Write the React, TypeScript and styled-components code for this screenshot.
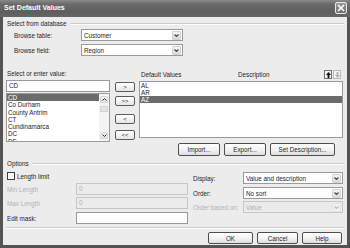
import styled, { createGlobalStyle } from 'styled-components'

const GlobalStyle = createGlobalStyle`
  html, body {
    margin: 0;
    padding: 0;
    background: #ffffff;
  }
  body {
    font-family: 'Liberation Sans', Arial, sans-serif;
    font-size: 6.3px;
    color: #1e1e1e;
  }
  * {
    box-sizing: border-box;
  }
`

const leftValues = ['CD', 'Co Durham', 'County Antrim', 'CT', 'Cundinamarca', 'DC', 'DE']
const defaultValues = ['AL', 'AR', 'AZ']

export default function App() {
    return (
        <>
            <GlobalStyle />
            <Window>
                <TitleBar>
                    <Title>Set Default Values</Title>
                    <CloseButton>
                        <svg width="8" height="8" viewBox="0 0 8 8">
                            <path d="M1 1 L7 7 M7 1 L1 7" stroke="#fff" strokeWidth="1.6" />
                        </svg>
                    </CloseButton>
                </TitleBar>
                <Body>
                    <GroupHeader>
                        <span>Select from database</span>
                        <GroupLine />
                    </GroupHeader>
                    <FieldRow $top={1}>
                        <FieldLabel $width={67}>Browse table:</FieldLabel>
                        <Combo $width={102}>
                            <ComboText>Customer</ComboText>
                            <DropButton />
                        </Combo>
                    </FieldRow>
                    <FieldRow $top={3}>
                        <FieldLabel $width={67}>Browse field:</FieldLabel>
                        <Combo $width={102}>
                            <ComboText>Region</ComboText>
                            <DropButton />
                        </Combo>
                    </FieldRow>

                    <ValuesArea>
                        <LeftColumn>
                            <ColumnLabel>Select or enter value:</ColumnLabel>
                            <TextBox>CD</TextBox>
                            <ListBox $height={49}>
                                <ListItems>
                                    {leftValues.map((v, i) => (
                                        <LeftItem key={v} $selected={i === 0}>
                                            {v}
                                        </LeftItem>
                                    ))}
                                </ListItems>
                                <ScrollBar>
                                    <ScrollArrow>
                                        <Chevron up />
                                    </ScrollArrow>
                                    <ScrollThumb />
                                    <ScrollTrack />
                                    <ScrollArrow>
                                        <Chevron />
                                    </ScrollArrow>
                                </ScrollBar>
                            </ListBox>
                        </LeftColumn>

                        <MoveColumn>
                            <MoveButton $top={15}>&gt;</MoveButton>
                            <MoveButton $top={4}>&gt;&gt;</MoveButton>
                            <MoveButton $top={8}>&lt;</MoveButton>
                            <MoveButton $top={6}>&lt;&lt;</MoveButton>
                        </MoveColumn>

                        <RightColumn>
                            <RightHeader>
                                <HeaderText $width={97}>Default Values</HeaderText>
                                <HeaderText $width={86}>Description</HeaderText>
                                <ArrowButton>
                                    <svg width="5" height="6" viewBox="0 0 5 6">
                                        <path d="M2.5 0 L5 3 L3.4 3 L3.4 6 L1.6 6 L1.6 3 L0 3 Z" fill="#111" />
                                    </svg>
                                </ArrowButton>
                                <ArrowButton $disabled>
                                    <svg width="5" height="6" viewBox="0 0 5 6">
                                        <path d="M2.5 6 L5 3 L3.4 3 L3.4 0 L1.6 0 L1.6 3 L0 3 Z" fill="#b0b0b0" />
                                    </svg>
                                </ArrowButton>
                            </RightHeader>
                            <ListBox $height={57}>
                                <ListItems>
                                    {defaultValues.map((v, i) => (
                                        <RightItem key={v} $selected={i === 2}>
                                            {v}
                                        </RightItem>
                                    ))}
                                </ListItems>
                            </ListBox>
                            <ActionRow>
                                <PushButton $width={42}>Import...</PushButton>
                                <PushButton $width={42}>Export...</PushButton>
                                <PushButton $width={65}>Set Description...</PushButton>
                            </ActionRow>
                        </RightColumn>
                    </ValuesArea>

                    <GroupHeader $top={4}>
                        <span>Options</span>
                        <GroupLine />
                    </GroupHeader>

                    <OptionsArea>
                        <OptionsColumn>
                            <CheckRow>
                                <CheckBox />
                                <span>Length limit</span>
                            </CheckRow>
                            <OptionRow $top={3}>
                                <OptionLabel $width={70} $disabled>
                                    Min Length
                                </OptionLabel>
                                <TextBox $width={112} $disabled>
                                    0
                                </TextBox>
                            </OptionRow>
                            <OptionRow $top={2}>
                                <OptionLabel $width={70} $disabled>
                                    Max Length
                                </OptionLabel>
                                <TextBox $width={112} $disabled>
                                    0
                                </TextBox>
                            </OptionRow>
                            <OptionRow $top={3}>
                                <OptionLabel $width={70}>Edit mask:</OptionLabel>
                                <TextBox $width={112} />
                            </OptionRow>
                        </OptionsColumn>
                        <OptionsColumn>
                            <OptionRow $top={4}>
                                <OptionLabel $width={51}>Display:</OptionLabel>
                                <Combo $width={100}>
                                    <ComboText>Value and description</ComboText>
                                    <DropButton />
                                </Combo>
                            </OptionRow>
                            <OptionRow $top={3}>
                                <OptionLabel $width={51}>Order:</OptionLabel>
                                <Combo $width={100}>
                                    <ComboText>No sort</ComboText>
                                    <DropButton />
                                </Combo>
                            </OptionRow>
                            <OptionRow $top={2}>
                                <OptionLabel $width={51} $disabled>
                                    Order based on:
                                </OptionLabel>
                                <Combo $width={100} $disabled>
                                    <ComboText>Value</ComboText>
                                    <DropButton $disabled />
                                </Combo>
                            </OptionRow>
                        </OptionsColumn>
                    </OptionsArea>

                    <Separator />

                    <DialogButtons>
                        <PushButton $width={45} $height={12}>
                            OK
                        </PushButton>
                        <PushButton $width={41} $height={12}>
                            Cancel
                        </PushButton>
                        <PushButton $width={40} $height={12}>
                            Help
                        </PushButton>
                    </DialogButtons>
                </Body>
            </Window>
        </>
    )
}

function Chevron({ up }: { up?: boolean }) {
    return (
        <svg width="5" height="3" viewBox="0 0 5 3">
            <path d={up ? 'M0.5 2.5 L2.5 0.5 L4.5 2.5' : 'M0.5 0.5 L2.5 2.5 L4.5 0.5'} stroke="#333" strokeWidth="1" fill="none" />
        </svg>
    )
}

function DropButton({ $disabled }: { $disabled?: boolean }) {
    return (
        <DropBox $disabled={$disabled}>
            <svg width="5" height="3" viewBox="0 0 5 3">
                <path d="M0.5 0.5 L2.5 2.5 L4.5 0.5" stroke={$disabled ? '#bbb' : '#444'} strokeWidth="1.1" fill="none" />
            </svg>
        </DropBox>
    )
}

const Window = styled.div`
    width: 350px;
    height: 248px;
    display: flex;
    flex-direction: column;
    background: #545454;
    padding: 0 3px 3px 3px;
`

const TitleBar = styled.div`
    height: 17px;
    margin: 0 -3px;
    padding: 0 3px 0 4px;
    display: flex;
    align-items: center;
    justify-content: space-between;
    background: linear-gradient(to bottom, #8a8a8a 0%, #6a6a6a 25%, #5e5e5e 70%, #666 100%);
`

const Title = styled.div`
    color: #ffffff;
    font-weight: bold;
    font-size: 7px;
    margin-top: -2px;
`

const CloseButton = styled.div`
    width: 12px;
    height: 12px;
    margin-top: -2px;
    border: 1px solid #e8e8e8;
    border-radius: 2px;
    background: linear-gradient(to bottom, #9a9a9a, #6f6f6f);
    display: flex;
    align-items: center;
    justify-content: center;
`

const Body = styled.div`
    flex: 1;
    background: #ececec;
    padding: 0 3px 0 3px;
    display: flex;
    flex-direction: column;
`

const GroupHeader = styled.div<{ $top?: number }>`
    margin-top: ${(p) => p.$top ?? 3}px;
    height: 8px;
    line-height: 8px;
    padding-left: 1px;
    display: flex;
    align-items: center;
    gap: 3px;
    white-space: nowrap;
`

const GroupLine = styled.div`
    flex: 1;
    height: 2px;
    border-top: 1px solid #cdcdcd;
    border-bottom: 1px solid #ffffff;
`

const FieldRow = styled.div<{ $top: number }>`
    margin-top: ${(p) => p.$top}px;
    padding-left: 8px;
    display: flex;
    align-items: center;
`

const FieldLabel = styled.div<{ $width: number }>`
    width: ${(p) => p.$width}px;
`

const Combo = styled.div<{ $width: number; $disabled?: boolean }>`
    width: ${(p) => p.$width}px;
    height: 12px;
    border: 1px solid ${(p) => (p.$disabled ? '#c6c6c6' : '#9a9a9a')};
    background: ${(p) => (p.$disabled ? '#ebebeb' : '#ffffff')};
    color: ${(p) => (p.$disabled ? '#b2b2b2' : '#1e1e1e')};
    display: flex;
    align-items: center;
    padding: 0 1px 0 2px;
`

const ComboText = styled.div`
    flex: 1;
    white-space: nowrap;
    overflow: hidden;
`

const DropBox = styled.div<{ $disabled?: boolean }>`
    width: 9px;
    height: 9px;
    border: 1px solid ${(p) => (p.$disabled ? '#e2e2e2' : '#d2d2d2')};
    border-radius: 1px;
    background: ${(p) => (p.$disabled ? '#f0f0f0' : 'linear-gradient(to bottom, #f4f4f4, #dadada)')};
    display: flex;
    align-items: center;
    justify-content: center;
`

const ValuesArea = styled.div`
    margin-top: 11px;
    display: flex;
    align-items: flex-start;
`

const LeftColumn = styled.div`
    width: 104px;
    display: flex;
    flex-direction: column;
`

const ColumnLabel = styled.div`
    height: 13px;
    padding: 3px 0 0 1px;
    line-height: 8px;
`

const TextBox = styled.div<{ $width?: number; $disabled?: boolean }>`
    width: ${(p) => (p.$width ? `${p.$width}px` : 'auto')};
    height: 12px;
    line-height: 10px;
    padding-left: 2px;
    border: 1px solid ${(p) => (p.$disabled ? '#c6c6c6' : '#9a9a9a')};
    background: ${(p) => (p.$disabled ? '#ebebeb' : '#ffffff')};
    color: ${(p) => (p.$disabled ? '#b2b2b2' : '#1e1e1e')};
`

const ListBox = styled.div<{ $height: number }>`
    margin-top: 1px;
    height: ${(p) => p.$height}px;
    border: 1px solid #9a9a9a;
    background: #ffffff;
    display: flex;
    overflow: hidden;
`

const ListItems = styled.div`
    flex: 1;
    display: flex;
    flex-direction: column;
`

const LeftItem = styled.div<{ $selected?: boolean }>`
    height: 7.3px;
    flex-shrink: 0;
    line-height: 7.3px;
    padding-left: 1px;
    white-space: nowrap;
    background: ${(p) => (p.$selected ? '#6b6b6b' : 'transparent')};
    color: ${(p) => (p.$selected ? '#ffffff' : '#1e1e1e')};
`

const RightItem = styled.div<{ $selected?: boolean }>`
    height: 7px;
    flex-shrink: 0;
    line-height: 7px;
    padding-left: 1px;
    background: ${(p) => (p.$selected ? '#6b6b6b' : 'transparent')};
    color: ${(p) => (p.$selected ? '#ffffff' : '#1e1e1e')};
`

const ScrollBar = styled.div`
    width: 10px;
    display: flex;
    flex-direction: column;
    background: #f4f4f4;
    padding: 2px 0 2px;
`

const ScrollArrow = styled.div`
    height: 7px;
    margin: 0 1px;
    border: 1px solid #d8d8d8;
    border-radius: 1px;
    background: linear-gradient(to bottom, #f6f6f6, #dedede);
    display: flex;
    align-items: center;
    justify-content: center;
`

const ScrollThumb = styled.div`
    height: 6px;
    margin: 3px 1px 0;
    border: 1px solid #d4d4d4;
    background: #e4e4e4;
`

const ScrollTrack = styled.div`
    flex: 1;
`

const MoveColumn = styled.div`
    width: 20px;
    margin-left: 5px;
    display: flex;
    flex-direction: column;
`

const MoveButton = styled.div<{ $top: number }>`
    margin-top: ${(p) => p.$top}px;
    height: 10px;
    border: 1px solid #5a5a5a;
    border-radius: 2px;
    background: linear-gradient(to bottom, #ffffff, #e6e6e6);
    font-size: 6px;
    display: flex;
    align-items: center;
    justify-content: center;
`

const RightColumn = styled.div`
    width: 204px;
    margin-left: 4px;
    display: flex;
    flex-direction: column;
`

const RightHeader = styled.div`
    height: 13px;
    padding-left: 2px;
    display: flex;
    align-items: flex-end;
    padding-bottom: 1px;
`

const HeaderText = styled.div<{ $width: number }>`
    width: ${(p) => p.$width}px;
    line-height: 8px;
`

const ArrowButton = styled.div<{ $disabled?: boolean }>`
    width: 8px;
    height: 9px;
    margin-right: 1px;
    border: 1px solid ${(p) => (p.$disabled ? '#b8b8b8' : '#707070')};
    background: #f4f4f4;
    display: flex;
    align-items: center;
    justify-content: center;
`

const ActionRow = styled.div`
    margin-top: 5px;
    padding-right: 8px;
    display: flex;
    justify-content: flex-end;
    gap: 4px;
`

const PushButton = styled.div<{ $width: number; $height?: number }>`
    width: ${(p) => p.$width}px;
    height: ${(p) => p.$height ?? 13}px;
    border: 1px solid #4e4e4e;
    border-radius: 2px;
    background: linear-gradient(to bottom, #ffffff, #f0f0f0 60%, #dcdcdc);
    display: flex;
    align-items: center;
    justify-content: center;
    white-space: nowrap;
`

const OptionsArea = styled.div`
    display: flex;
    gap: 4px;
`

const OptionsColumn = styled.div`
    display: flex;
    flex-direction: column;
`

const CheckRow = styled.div`
    margin-top: 4px;
    height: 8px;
    padding-left: 1px;
    display: flex;
    align-items: center;
    gap: 2px;
`

const CheckBox = styled.div`
    width: 8px;
    height: 8px;
    border: 1px solid #3c3c3c;
    background: #ffffff;
`

const OptionRow = styled.div<{ $top: number }>`
    margin-top: ${(p) => p.$top}px;
    display: flex;
    align-items: center;
`

const OptionLabel = styled.div<{ $width: number; $disabled?: boolean }>`
    width: ${(p) => p.$width}px;
    padding-left: 1px;
    color: ${(p) => (p.$disabled ? '#b2b2b2' : '#1e1e1e')};
    white-space: nowrap;
`

const Separator = styled.div`
    margin-top: 3px;
    height: 2px;
    border-top: 1px solid #cdcdcd;
    border-bottom: 1px solid #ffffff;
`

const DialogButtons = styled.div`
    margin-top: 3px;
    padding-right: 2px;
    display: flex;
    justify-content: flex-end;
    gap: 4px;
`
